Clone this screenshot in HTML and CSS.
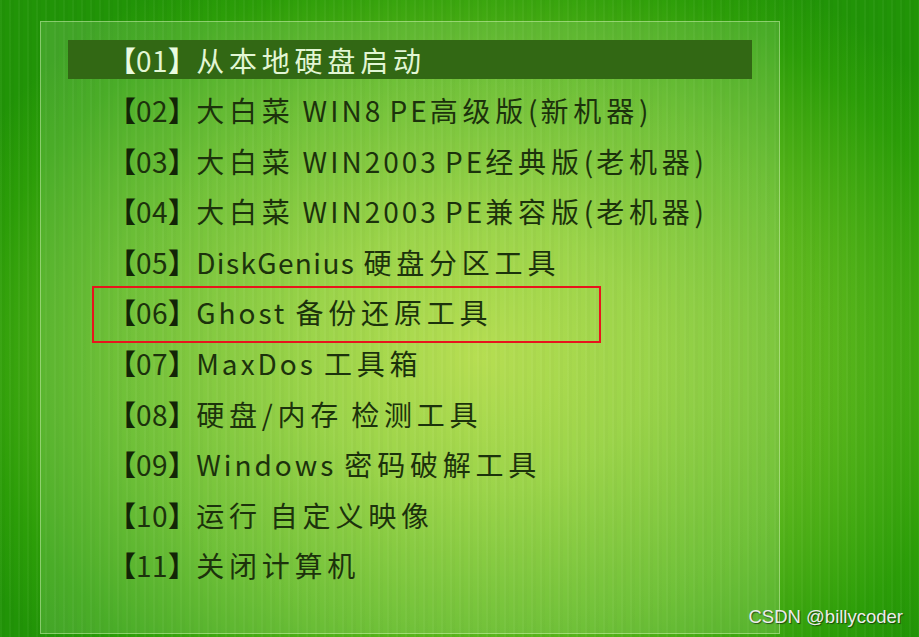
FILE: index.html
```html
<!DOCTYPE html>
<html lang="zh-CN">
<head>
<meta charset="utf-8">
<title>大白菜 启动菜单</title>
<link rel="stylesheet" href="styles.css">
</head>
<body>
<div class="screen">
  <div class="panel">
    <ul class="menu">
      <li class="item selected"><b class="br">【</b><span class="num">01</span><b class="br">】</b>从本地硬盘启动</li>
      <li class="item"><b class="br">【</b><span class="num">02</span><b class="br">】</b>大白菜 <span class="lat">WIN8 PE</span>高级版<span class="lat">(</span>新机器<span class="lat">)</span></li>
      <li class="item"><b class="br">【</b><span class="num">03</span><b class="br">】</b>大白菜 <span class="lat">WIN2003 PE</span>经典版<span class="lat">(</span>老机器<span class="lat">)</span></li>
      <li class="item"><b class="br">【</b><span class="num">04</span><b class="br">】</b>大白菜 <span class="lat">WIN2003 PE</span>兼容版<span class="lat">(</span>老机器<span class="lat">)</span></li>
      <li class="item"><b class="br">【</b><span class="num">05</span><b class="br">】</b><span class="lat tight">DiskGenius</span> 硬盘分区工具</li>
      <li class="item marked"><b class="br">【</b><span class="num">06</span><b class="br">】</b><span class="lat">Ghost</span> 备份还原工具</li>
      <li class="item"><b class="br">【</b><span class="num">07</span><b class="br">】</b><span class="lat">MaxDos</span> 工具箱</li>
      <li class="item"><b class="br">【</b><span class="num">08</span><b class="br">】</b>硬盘/内存 检测工具</li>
      <li class="item"><b class="br">【</b><span class="num">09</span><b class="br">】</b><span class="lat">Windows</span> 密码破解工具</li>
      <li class="item"><b class="br">【</b><span class="num">10</span><b class="br">】</b>运行 自定义映像</li>
      <li class="item"><b class="br">【</b><span class="num">11</span><b class="br">】</b>关闭计算机</li>
    </ul>
  </div>
  <div class="watermark">CSDN @billycoder</div>
</div>
</body>
</html>
```

FILE: styles.css
```css
html, body {
  margin: 0;
  padding: 0;
  width: 919px;
  height: 637px;
  overflow: hidden;
}

.screen {
  position: relative;
  width: 919px;
  height: 637px;
  box-sizing: border-box;
  padding: 21px 0 0 40px;
  background:
    repeating-linear-gradient(90deg, rgba(255,255,255,0.035) 0 2px, rgba(0,0,0,0.02) 2px 5px, rgba(255,255,255,0) 5px 9px),
    radial-gradient(ellipse 62% 70% at 52% 56%, #acd83a 0%, #8ccc30 30%, #5ab61c 62%, #2c9e08 88%, #219407 100%);
  font-family: "Noto Sans CJK SC", "Noto Sans", sans-serif;
}

.panel {
  width: 740px;
  height: 613px;
  box-sizing: border-box;
  background: rgba(235, 255, 210, 0.16);
  border: 1px solid rgba(220, 250, 190, 0.45);
  padding: 18px 0 0 27px;
}

.menu {
  list-style: none;
  margin: 0;
  padding: 0;
  width: 684px;
  display: flex;
  flex-direction: column;
  gap: 11.6px;
}

.item {
  position: relative;
  height: 39px;
  display: flex;
  align-items: center;
  padding-left: 40px;
  font-size: 28px;
  letter-spacing: 4.8px;
  word-spacing: -3px;
  color: #1c320c;
  white-space: pre;
}

.br {
  font-weight: 700;
  color: #122406;
  letter-spacing: 0;
}

.num {
  letter-spacing: 0.5px;
}

.lat {
  letter-spacing: 3px;
}

.tight {
  letter-spacing: 1.4px;
}

.selected {
  background: #326814;
  color: #e2f6d4;
}

.selected .br {
  color: #eafbe0;
}

.marked::after {
  content: "";
  position: absolute;
  left: 24px;
  top: -7px;
  width: 509px;
  height: 57px;
  box-sizing: border-box;
  border: 2px solid #e8141c;
}

.watermark {
  position: absolute;
  right: 16px;
  bottom: 9px;
  font-family: "Liberation Sans", Arial, sans-serif;
  font-size: 18.5px;
  color: #ececec;
  text-shadow: 1px 1px 1px rgba(0,0,0,0.55);
}
```
